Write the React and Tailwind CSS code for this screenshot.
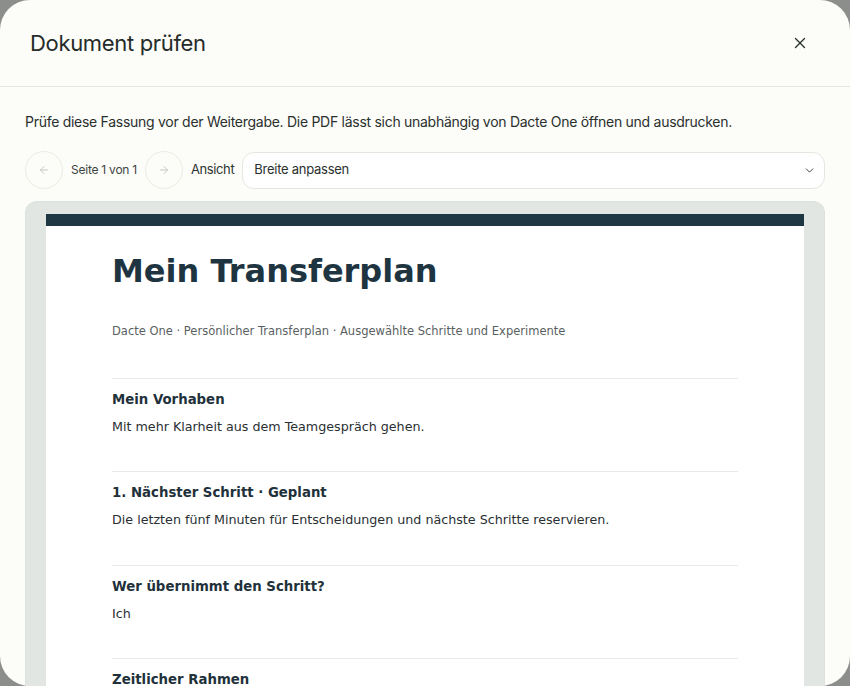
import { X, ArrowLeft, ArrowRight, ChevronDown } from 'lucide-react';

const sections = [
  { title: 'Mein Vorhaben', text: 'Mit mehr Klarheit aus dem Teamgespräch gehen.' },
  { title: '1. Nächster Schritt · Geplant', text: 'Die letzten fünf Minuten für Entscheidungen und nächste Schritte reservieren.' },
  { title: 'Wer übernimmt den Schritt?', text: 'Ich' },
  { title: 'Zeitlicher Rahmen', text: 'Nächste Woche' },
];

function PdfPage() {
  return (
    <div className="mx-[20px] mt-[12px] bg-white" style={{ fontFamily: '"DejaVu Sans", sans-serif' }}>
      <div className="h-[12px] bg-[#1e3743]" />
      <div className="px-[66px] pt-[25px] pb-10">
        <h1 className="text-[32px] font-bold leading-[40px] text-[#1e3541]">Mein Transferplan</h1>
        <p className="mt-[32px] text-[11.5px] leading-[16px] text-[#5a5f62]">
          Dacte One · Persönlicher Transferplan · Ausgewählte Schritte und Experimente
        </p>
        <div className="mt-[39px]">
          {sections.map((s) => (
            <div key={s.title} className="h-[93.3px] border-t border-[#e8eaea] pt-[12px]">
              <h2 className="text-[13.3px] font-bold leading-[18px] text-[#1f313b]">{s.title}</h2>
              <p className="mt-[9px] text-[12.7px] leading-[18px] text-[#2a2f33]">{s.text}</p>
            </div>
          ))}
        </div>
      </div>
    </div>
  );
}

export default function App() {
  return (
    <div className="h-[686px] w-[850px] overflow-hidden bg-[#8b8e8b]">
      <div
        className="flex h-full flex-col overflow-hidden rounded-[30px] bg-[#fcfcf8] text-[#1e2624]"
        style={{ fontFamily: 'Inter, "Noto Sans", sans-serif' }}
      >
        <header className="flex h-[87px] shrink-0 items-center justify-between border-b border-[#e7e7e2] pl-[30px] pr-[41px]">
          <h2 className="text-[22px] font-normal tracking-[-0.015em] text-[#252b29]">Dokument prüfen</h2>
          <button type="button" className="text-[#2b3331]" aria-label="Schließen">
            <X size={18} strokeWidth={1.8} />
          </button>
        </header>

        <div className="flex min-h-0 flex-1 flex-col px-[25px] pt-[25px]">
          <p className="text-[14px] leading-[20px] tracking-[-0.02em] text-[#2a302e]">
            Prüfe diese Fassung vor der Weitergabe. Die PDF lässt sich unabhängig von Dacte One öffnen und ausdrucken.
          </p>

          <div className="mt-[19px] flex h-[38px] items-center gap-[8px]">
            <button type="button" className="flex h-[38px] w-[38px] items-center justify-center rounded-full border border-[#ecece6] text-[#b4b8b5]">
              <ArrowLeft size={12} strokeWidth={1.5} />
            </button>
            <span className="text-[12px] tracking-[-0.02em] text-[#3d4441]">Seite 1 von 1</span>
            <button type="button" className="flex h-[38px] w-[38px] items-center justify-center rounded-full border border-[#ecece6] text-[#b4b8b5]">
              <ArrowRight size={12} strokeWidth={1.5} />
            </button>
            <span className="text-[13px] tracking-[-0.03em] text-[#2e3532]">Ansicht</span>
            <div className="flex h-[37px] flex-1 items-center justify-between rounded-[12px] border border-[#e6e6e0] bg-white pl-[11px] pr-[8px]">
              <span className="text-[13px] tracking-[-0.02em] text-[#2a302e]">Breite anpassen</span>
              <ChevronDown size={13} strokeWidth={1.8} className="text-[#3a403e]" />
            </div>
          </div>

          <div className="mt-[12px] min-h-0 flex-1 overflow-hidden rounded-t-[12px] border border-b-0 border-[#dde1de] bg-[#e2e6e3]">
            <PdfPage />
          </div>
        </div>
      </div>
    </div>
  );
}
